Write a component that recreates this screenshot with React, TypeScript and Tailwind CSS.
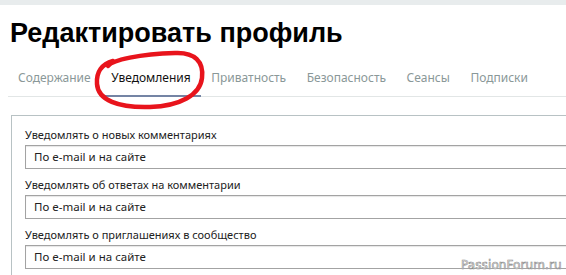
const tabs = ["Содержание", "Уведомления", "Приватность", "Безопасность", "Сеансы", "Подписки"];

const fields = [
  "Уведомлять о новых комментариях",
  "Уведомлять об ответах на комментарии",
  "Уведомлять о приглашениях в сообщество",
];

const App = () => {
  return (
    <div className="relative w-[566px] h-[275px] overflow-hidden bg-white font-['Noto_Sans',sans-serif]">
      <div className="h-[5px] bg-[#e8eced]" />

      <div className="pl-[10px]">
        {/* Title */}
        <h1 className="mt-[10px] text-[27px] leading-[36px] font-bold text-black font-['Liberation_Sans',Arial,sans-serif]">
          Редактировать профиль
        </h1>

        {/* Tabs */}
        <div className="mt-[18px] -ml-[2px] flex gap-[0.5px] border-b border-[#e2e6e6] w-[600px]">
          {tabs.map((t, i) => (
            <div
              key={t}
              className={
                i === 1
                  ? "px-[10px] pb-[8px] text-[12px] leading-[18px] text-[#111] border-b-2 border-[#7484a4] -mb-px"
                  : "px-[10px] pb-[8px] text-[12px] leading-[18px] text-[#8a9898]"
              }
            >
              {t}
            </div>
          ))}
        </div>

        {/* Panel */}
        <div className="mt-[18px] ml-px w-[580px] border border-[#b8c2c4] px-[13px] pt-[10px]">
          {fields.map((f) => (
            <div key={f} className="mb-[7px]">
              <div className="text-[11px] leading-[17px] text-[#222]">{f}</div>
              <div className="mt-[2px] h-[24px] border border-[#a3a3a3] shadow-[inset_0_1px_1px_#e6e6e6] flex items-center pl-[8px] text-[11.5px] text-[#222]">
                По e-mail и на сайте
              </div>
            </div>
          ))}
        </div>
      </div>

      {/* Red marker circle */}
      <svg className="absolute left-0 top-0" width="566" height="275" viewBox="0 0 566 275" fill="none">
        <path
          d="M108 66 C112 60, 140 54, 175 53 C195 52, 204 62, 202 78 C200 95, 180 106, 150 107 C118 108, 98 100, 97 84 C96 72, 102 64, 113 61"
          stroke="#e8141c"
          strokeWidth="4.5"
          strokeLinecap="round"
        />
      </svg>

      {/* Watermark */}
      <span className="absolute left-[461px] top-[258px] text-[12px] leading-[14px] tracking-[0.1px] text-white font-['DejaVu_Sans',sans-serif] [-webkit-text-stroke:0.6px_#8a8a8a]">
        PassionForum.ru
      </span>
    </div>
  );
};

export default App;
